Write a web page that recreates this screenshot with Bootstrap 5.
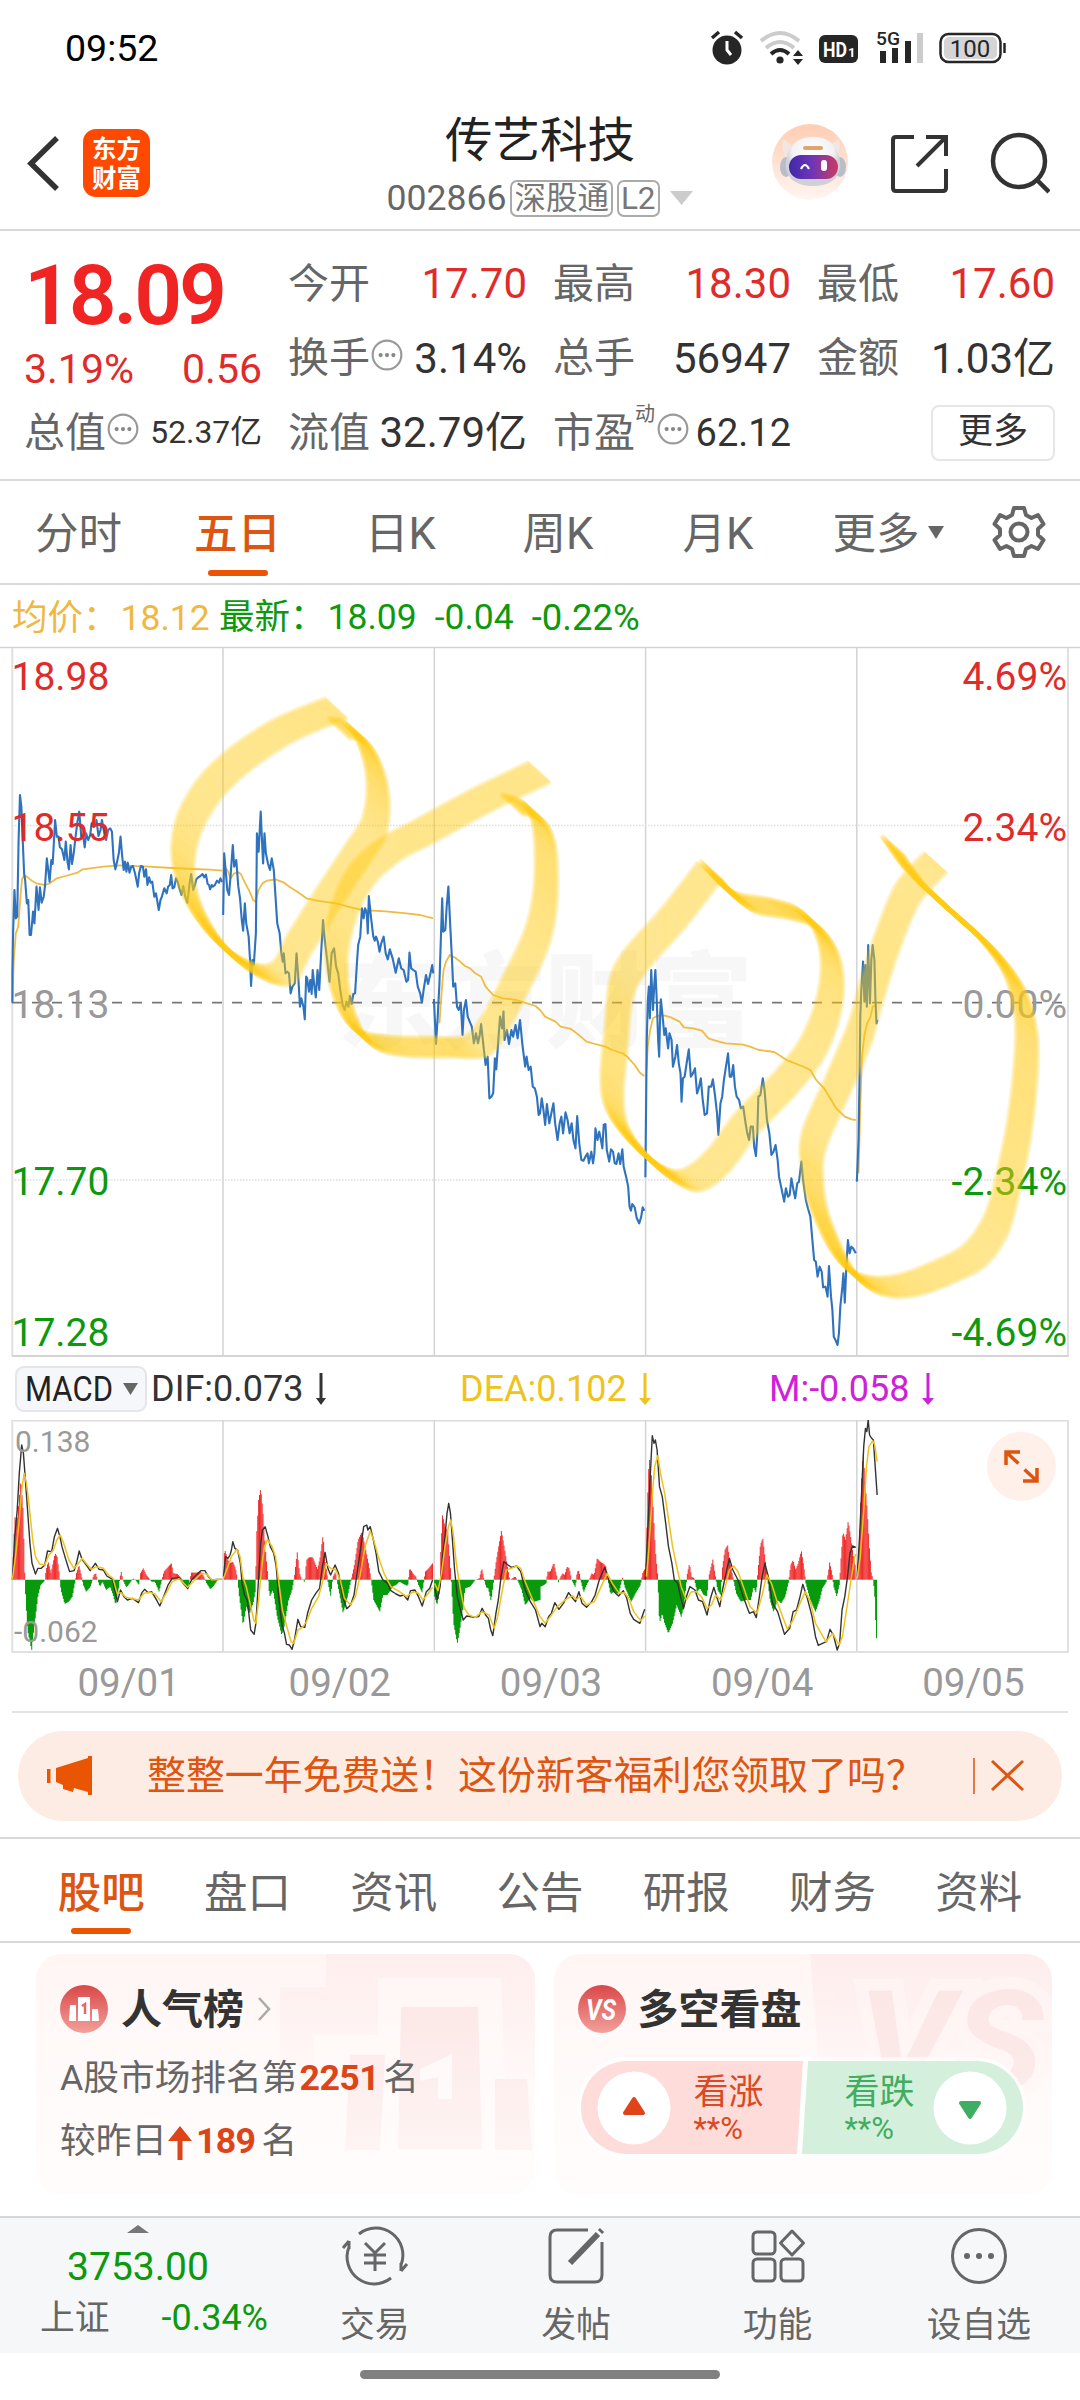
<!DOCTYPE html>
<html lang="zh-CN">
<head>
<meta charset="utf-8">
<meta name="viewport" content="width=device-width, initial-scale=1">
<title>传艺科技 002866</title>
<link rel="stylesheet" href="https://cdn.jsdelivr.net/npm/bootstrap@5.3.0/dist/css/bootstrap.min.css">
<style>
body{width:1080px;height:2400px;overflow:hidden;background:#fff;color:#333;font-family:Roboto,"Noto Sans CJK SC",sans-serif;line-height:1}
svg{display:block;flex:none}
.statusbar{height:96px;padding:2px 74px 0 65px;font-size:37.5px;color:#000}
.titlebar{height:135px;border-bottom:2px solid #d9d9d9;padding:0 30px 0 27px}
.title-mid{left:0;right:0;top:20px}
.stock-name{font-size:47.5px;color:#222;line-height:50px}
.stock-code{font-size:35.6px;color:#666;height:38px;margin-top:13px;line-height:38px}
.tagbox{border:2px solid #aaa;border-radius:7px;height:37px;line-height:33px;font-size:31.5px;padding:0 2px;color:#777}
.quote{height:250px;border-bottom:2px solid #d9d9d9;padding:16px 25px 0 24px}
.quote-grid{display:grid;grid-template-columns:238px 239px 238px 238px;column-gap:26px}
.q-cell{height:74.5px;font-size:42px;color:#333}
.q-name{color:#666;font-size:41px}
.up{color:#e02b2b}.dn{color:#0c990c}
.big-price{font-size:84px;font-weight:600;color:#f12424;height:93px;line-height:98px;letter-spacing:-3.2px;padding-left:0}
.chg{height:56px;font-size:41px;padding-top:3px}
.more-btn{width:124px;height:56px;border:2px solid #e6e6e6;border-radius:8px;font-size:35px;color:#333;padding-bottom:3px}
.periods{height:104px;border-bottom:2px solid #d9d9d9;font-size:43.5px;color:#666}
.periods>div{height:102px;padding-top:5px}
.on{color:#dd5511;font-weight:500;position:relative}
.on::after{content:"";position:absolute;left:50%;margin-left:-30px;width:60px;height:6px;border-radius:3px;background:#ea5504;bottom:7px}
.avg-row{height:62px;font-size:35.5px;padding:5px 0 0 12px}
.macd-row{height:63px;font-size:36px}
.macd-btn{width:132px;height:46px;border:2px solid #e3e5e8;border-radius:9px;background:#f6f7fa;margin-left:15px}
.dates{height:60px;margin:0 12px;border-bottom:2px solid #e3e3e3;padding:3px 0 0 11px;font-size:38.5px;color:#999}
.dates>div{width:211.2px;flex:none}
.promo{margin:18px 18px 16px;height:90px;border-radius:45px;background:#fcece3;color:#dd5511;font-size:38.9px;padding:0 37px 0 29px}
.subtabs{height:106px;border-top:2px solid #d9d9d9;border-bottom:2px solid #d9d9d9;padding:0 28px;font-size:43.5px;color:#666}
.subtabs>div{width:146.3px;height:102px;padding-top:8px}
.info-cards{padding:11px 28px 21px 36px;gap:19px;height:273px}
.info-card{width:499px;height:241px;border-radius:26px;position:relative;overflow:hidden;background:linear-gradient(#fff6f4,#fffafa 50%,#fffdfc)}
.card-bgart{position:absolute;left:0;top:0}
.card-body-z{position:relative;padding:30px 24px}
.card-head{font-size:41px;font-weight:700;height:50px;color:#333;gap:13px}
.rank-line{font-size:35.7px;color:#666;height:63px;white-space:nowrap}
.hot{color:#dd4418;font-weight:700}
.vote{position:relative;margin:27px 0 0 3px;width:442px;height:93px}
.vote-inner{position:absolute;inset:0;padding:0 16px}
.vote-txt{font-size:35px;line-height:39px;padding-top:3px}
.vote-txt small{font-size:31px;line-height:34px;display:block}
.bottombar{height:137px;border-top:2px solid #d3d8dc;background:#f6f7f9;color:#666;font-size:34.8px}
.bottombar .tabitem{width:201.4px}
.idx{width:274px;padding-top:7px}
.home-ind{width:360px;height:9px;border-radius:5px;background:#808080;margin:17px auto 0}
</style>
<script src="https://cdn.jsdelivr.net/npm/bootstrap@5.3.0/dist/js/bootstrap.bundle.min.js"></script>
</head>
<body>
<!-- status bar -->
<div class="statusbar d-flex align-items-center justify-content-between">
  <span>09:52</span>
  <svg width="296" height="56" viewBox="709 21 296 56">
    <g fill="#262626"><circle cx="726" cy="50" r="14.5"/><path d="M711 38l7-6M741 38l-7-6" stroke="#262626" stroke-width="3.5"/><path d="M726 41v9l4 5" stroke="#fff" stroke-width="3" fill="none"/></g>
    <g fill="none" stroke-width="4"><path d="M760 41q19-16 38 0" stroke="#ccc"/><path d="M765 48q14-12 28 0" stroke="#ccc"/><path d="M770 54q9-8 18 0" stroke="#262626"/></g>
    <circle cx="779" cy="60" r="3.6" fill="#262626"/><path d="M792 56l5-6 5 6zM792 59l5 6 5-6z" fill="#262626"/>
    <rect x="818" y="35" width="39" height="28" rx="6" fill="#262626"/><text x="822" y="57" font-size="21" font-weight="700" fill="#fff" textLength="24" lengthAdjust="spacingAndGlyphs">HD</text><text x="847" y="57" font-size="13" font-weight="700" fill="#fff">1</text>
    <text x="875" y="45" font-size="19" font-weight="500" fill="#262626" textLength="24" lengthAdjust="spacingAndGlyphs">5G</text>
    <path d="M882 51v12M894 48v15M907 41v22" stroke="#262626" stroke-width="6"/><path d="M919 33v30" stroke="#ccc" stroke-width="6"/>
    <rect x="939.5" y="34" width="60" height="28" rx="8" fill="#fff" stroke="#262626" stroke-width="2.500"/><rect x="943" y="37" width="53" height="22" rx="5" fill="#d5d5d5"/><path d="M1003.500 43v10" stroke="#262626" stroke-width="2.500"/>
    <text x="969" y="57" font-size="24" text-anchor="middle" fill="#262626">100</text>
  </svg>
</div>
<!-- title bar -->
<header class="titlebar d-flex align-items-center position-relative">
  <svg width="124" height="70" viewBox="27 128 124 70"><path d="M57 138L31 163.500l26 25.500" fill="none" stroke="#333" stroke-width="5.500"/><rect x="83" y="129" width="67" height="68" rx="13" fill="#ff4800"/><g fill="#fff" font-size="24.500" font-weight="700"><text x="92" y="158">东方</text><text x="92" y="187">财富</text></g></svg>
  <div class="title-mid position-absolute text-center">
    <div class="stock-name">传艺科技</div>
    <div class="stock-code d-flex justify-content-center align-items-center"><span>002866</span><span class="tagbox ms-1">深股通</span><span class="tagbox ms-1">L2</span><svg style="margin-left:10px" width="24" height="16"><path d="M0 1h23l-11.500 14z" fill="#ccc"/></svg></div>
  </div>
  <div class="d-flex align-items-center ms-auto" style="gap:41px">
    <svg width="78" height="80" viewBox="768 124 78 80">
      <defs><linearGradient id="halo" x2="0" y2="1"><stop stop-color="#ffcdb2"/><stop offset="1" stop-color="#fff6f1"/></linearGradient><linearGradient id="visor"><stop stop-color="#4128a8"/><stop offset=".45" stop-color="#6b35b8"/><stop offset="1" stop-color="#cc3a62"/></linearGradient><radialGradient id="shell" cy=".3"><stop stop-color="#fff"/><stop offset=".75" stop-color="#f2f2f5"/><stop offset="1" stop-color="#cfd0d8"/></radialGradient></defs>
      <circle cx="808" cy="163" r="38" fill="url(#halo)"/><path d="M781 140l9 6-5 14q-7-10-4-20zM837 140l-9 6 5 14q7-10 4-20z" fill="#f1e6e2"/>
      <ellipse cx="784" cy="168" rx="6" ry="10" fill="#b9bcc9"/><ellipse cx="838" cy="168" rx="6" ry="10" fill="#b9bcc9"/>
      <path d="M811 138c17 0 25 10 27 24 2 15-8 25-27 25s-29-10-27-25c2-14 10-24 27-24z" fill="url(#shell)"/><rect x="801" y="147" width="20" height="4" rx="2" fill="#dea66e"/><rect x="787" y="156" width="49" height="24" rx="12" fill="url(#visor)"/><path d="M799 170q4-8 8 0" fill="none" stroke="#fff" stroke-width="2.200"/><rect x="819" y="161" width="6" height="11" rx="3" fill="#fff"/>
    </svg>
    <svg width="60" height="60" viewBox="886 133 60 60" fill="none" stroke="#333" stroke-width="4"><path d="M911 137H893q-3 0-3 3v48q0 3 3 3h47q3 0 3-3v-19M923 137h20v19M943 137l-29 29"/></svg>
    <svg width="60" height="62" viewBox="990 132 60 62" fill="none" stroke="#333" stroke-width="4.500"><circle cx="1019" cy="161" r="26"/><path d="M1037 180l12 12"/></svg>
  </div>
</header>
<!-- quote summary -->
<section class="quote">
  <div class="quote-grid">
    <div style="grid-row:span 2"><div class="big-price">18.09</div><div class="chg up d-flex justify-content-between align-items-center"><span>3.19%</span><span>0.56</span></div></div>
    <div class="q-cell d-flex justify-content-between align-items-center"><span class="q-name">今开</span><span class="up">17.70</span></div>
    <div class="q-cell d-flex justify-content-between align-items-center"><span class="q-name">最高</span><span class="up">18.30</span></div>
    <div class="q-cell d-flex justify-content-between align-items-center"><span class="q-name">最低</span><span class="up">17.60</span></div>
    <div class="q-cell d-flex justify-content-between align-items-center"><span class="q-name d-flex align-items-center">换手<svg style="margin-top:-8px" width="34" height="34"><use href="#dots"/></svg></span><span>3.14%</span></div>
    <div class="q-cell d-flex justify-content-between align-items-center"><span class="q-name">总手</span><span>56947</span></div>
    <div class="q-cell d-flex justify-content-between align-items-center"><span class="q-name">金额</span><span>1.03亿</span></div>
    <div class="q-cell d-flex justify-content-between align-items-center"><span class="q-name d-flex align-items-center">总值<svg style="margin-top:-8px" width="34" height="34"><use href="#dots"/></svg></span><span style="font-size:31.800px">52.37亿</span></div>
    <div class="q-cell d-flex justify-content-between align-items-center"><span class="q-name">流值</span><span>32.79亿</span></div>
    <div class="q-cell d-flex justify-content-between align-items-center"><span class="q-name d-flex align-items-center">市盈<span class="align-self-start" style="font-size:20px;margin-top:-9px">动</span><svg style="margin:-8px 0 0 1px" width="34" height="34"><use href="#dots"/></svg></span><span style="font-size:38px">62.12</span></div>
    <div class="q-cell d-flex justify-content-end align-items-center"><div class="more-btn d-flex align-items-center justify-content-center">更多</div></div>
  </div>
  <svg width="0" height="0"><defs><symbol id="dots" viewBox="0 0 32 32"><circle cx="16" cy="16" r="13.500" fill="none" stroke="#999" stroke-width="2"/><g fill="#888"><circle cx="10" cy="16" r="2"/><circle cx="16" cy="16" r="2"/><circle cx="22" cy="16" r="2"/></g></symbol></defs></svg>
</section>
<!-- chart periods -->
<nav class="periods d-flex">
  <div class="d-flex align-items-center justify-content-center" style="width:157px">分时</div>
  <div class="d-flex align-items-center justify-content-center on" style="width:161px">五日</div>
  <div class="d-flex align-items-center justify-content-center" style="width:165px">日K</div>
  <div class="d-flex align-items-center justify-content-center" style="width:150px">周K</div>
  <div class="d-flex align-items-center justify-content-center" style="width:170px">月K</div>
  <div class="d-flex align-items-center justify-content-center" style="width:170px">更多<svg style="margin:-4px 0 0 8px" width="16" height="14"><path d="M0 0h16L8 13z" fill="#666"/></svg></div>
  <div class="d-flex align-items-center" style="padding:0 0 0 19px"><svg width="54" height="54" viewBox="-27 -27 54 54" fill="none" stroke="#666" stroke-width="4" stroke-linejoin="round"><path d="M-5-24H5L7-17L12.500-14L19-17L24.500-8L19-3V3L24.500 8L19 17L12.500 14L7 17L5 24H-5L-7 17L-12.500 14L-19 17L-24.500 8L-19 3V-3L-24.500-8L-19-17L-12.500-14L-7-17Z"/><circle r="8.500"/></svg></div>
</nav>
<div class="avg-row d-flex align-items-center"><span style="color:#f0b840;width:207px">均价：<span style="margin-left:2px">18.12</span></span><span class="dn d-flex" style="gap:18px"><span>最新：<span style="margin-left:2px">18.09</span></span><span>-0.04</span><span style="font-size:36.500px">-0.22%</span></span></div>
<!-- five-day price chart -->
<svg width="1080" height="711" viewBox="0 646 1080 711" style="margin-top:-1px">
  <g font-family='"Noto Sans CJK SC"' font-weight="900" font-size="104" fill="#f7f7f7"><text x="337" y="1040">东方财富</text></g>
  <g stroke="#d4d4d4" stroke-width="1.500" fill="none"><path d="M0 647.500H1080"/><path d="M223 648V1356M434.300 648V1356M645.600 648V1356M856.800 648V1356"/><path d="M12.300 648V1356M1068 648V1356" stroke="#e0e0e0" stroke-width="2"/><path d="M12 1356H1069" stroke-width="2"/><path d="M12 825.500H1068M12 1180H1068" stroke="#ddd" stroke-dasharray="1.500 1.500"/></g>
  <path d="M12 1002.700H1068" stroke="#777" stroke-width="1.800" stroke-dasharray="10 10"/>
  <g id="price" transform="translate(0 640) scale(.34439 .33333)" fill="none" stroke-linejoin="round"></g>
  <g font-size="39"><g><text x="11.500" y="690" fill="#e02b2b">18.98</text><text x="11.500" y="841" fill="#e02b2b">18.55</text><text x="11.500" y="1018" fill="#999">18.13</text><text x="11.500" y="1195" fill="#0c990c">17.70</text><text x="11.500" y="1346" fill="#0c990c">17.28</text></g>
  <g text-anchor="end"><text x="1067" y="690" fill="#e02b2b">4.69%</text><text x="1067" y="841" fill="#e02b2b">2.34%</text><text x="1067" y="1018" fill="#999">0.00%</text><text x="1067" y="1195" fill="#0c990c">-2.34%</text><text x="1067" y="1346" fill="#0c990c">-4.69%</text></g></g>
  <g id="marker" fill="none" stroke="#ffca10" stroke-linejoin="round"></g>
</svg>
<!-- MACD header -->
<div class="macd-row d-flex align-items-center">
  <div class="macd-btn d-flex align-items-center"><svg width="128" height="42" viewBox="0 0 128 42"><text x="8" y="33" font-size="35" fill="#222" textLength="88" lengthAdjust="spacingAndGlyphs">MACD</text><path d="M106 15h15l-7.500 12z" fill="#666"/></svg></div>
  <div class="d-flex align-items-center" style="width:310px;padding-left:4px">DIF:0.073<svg style="margin-left:11px" width="14" height="34"><path d="M7 1v28" stroke="#333" stroke-width="3"/><path d="M2 26h10l-5 7z" fill="#333"/></svg></div>
  <div class="d-flex align-items-center" style="width:309px;padding-left:3px;color:#efc31c">DEA:0.102<svg style="margin-left:11px" width="14" height="34"><path d="M7 1v28" stroke="#efc31c" stroke-width="3"/><path d="M1 26h12l-6 7z" fill="#efc31c"/></svg></div>
  <div class="d-flex align-items-center" style="padding-left:3px;color:#cf22d8">M:-0.058<svg style="margin-left:11px" width="14" height="34"><path d="M7 1v28" stroke="#cf22d8" stroke-width="3"/><path d="M1 26h12l-6 7z" fill="#cf22d8"/></svg></div>
</div>
<svg width="1080" height="233" viewBox="0 1420 1080 233">
  <g stroke="#d4d4d4" stroke-width="1.500" fill="none"><path d="M12 1420.800H1068" stroke="#ddd"/><path d="M223 1420V1652M434.300 1420V1652M645.600 1420V1652M856.800 1420V1652"/><path d="M12.300 1420V1652H1068V1420" stroke="#e0e0e0" stroke-width="2"/></g>
  <g id="bars" transform="translate(0 1350) scale(.34439 .33333)"></g>
  <g id="macd" transform="translate(0 1350) scale(.34439 .33333)" fill="none" stroke-linejoin="round"></g>
  <g font-size="30" fill="#999"><text x="15" y="1452">0.138</text><text x="14" y="1642">-0.062</text></g>
  <circle cx="1021.400" cy="1466.300" r="34.500" fill="#fff0e9"/><g fill="none" stroke="#dd5511" stroke-width="3.500"><path d="M1006 1465v-13h14M1006 1452l12.500 11.500M1037 1468v13h-14M1037 1481l-12.500-11.500"/></g>
</svg>
<div class="dates d-flex align-items-center text-center"><div>09/01</div><div>09/02</div><div>09/03</div><div>09/04</div><div>09/05</div></div>
<!-- promo banner -->
<div class="promo d-flex align-items-center">
  <svg width="46" height="40" viewBox="48 1756 46 40" fill="#ea5504"><path d="M48 1769h3.500v14h-3.500zM57 1768l32-10v-2h4v39h-4v-3l-14-4-1 4-10-3v-4l-7-3z"/></svg>
  <span style="margin-left:54px">整整一年免费送！这份新客福利您领取了吗？</span>
  <svg class="ms-auto" width="52" height="36" viewBox="973 1758 52 36" stroke="#dd5511" fill="none"><path d="M974 1758v36" stroke-width="1.500"/><path d="M992 1761l31 29M1023 1761l-31 29" stroke-width="3"/></svg>
</div>
<nav class="subtabs d-flex">
  <div class="d-flex align-items-center justify-content-center on">股吧</div><div class="d-flex align-items-center justify-content-center">盘口</div><div class="d-flex align-items-center justify-content-center">资讯</div><div class="d-flex align-items-center justify-content-center">公告</div><div class="d-flex align-items-center justify-content-center">研报</div><div class="d-flex align-items-center justify-content-center">财务</div><div class="d-flex align-items-center justify-content-center">资料</div>
</nav>
<!-- community cards -->
<div class="info-cards d-flex">
  <div class="info-card">
    <svg class="card-bgart" width="499" height="241" viewBox="36 1955 499 241"><defs><linearGradient id="fade" x2="0" y2="1"><stop stop-color="#fdeceb"/><stop offset="1" stop-color="#fdeceb" stop-opacity=".2"/></linearGradient><linearGradient id="pillar" x2="0" y2="1"><stop stop-color="#fae0df"/><stop offset="1" stop-color="#fdf0ee"/></linearGradient><linearGradient id="badgeRed" x2="0" y2="1"><stop stop-color="#d94848"/><stop offset="1" stop-color="#f2a09b"/></linearGradient></defs>
      <path d="M326 1955H535v125h-30l-4-101H378v57h-64v30h-34v-78h46z" fill="url(#fade)" opacity=".7"/><path d="M401 2008h77l4 142h-84zM350 2056h35l-5 95h-35zM495 2080h32l5 71h-37z" fill="url(#pillar)" opacity=".65"/><path d="M420 2070l32-15v45h-14v-22l-18 4z" fill="#fff" opacity=".7"/></svg>
    <div class="card-body-z">
      <div class="card-head d-flex align-items-center"><svg width="48" height="48" viewBox="0 0 48 48"><circle cx="24" cy="24" r="24" fill="url(#badgeRed)"/><path d="M10 20h6v16h-7zM18 12h12v24H18zM32 24h6l1 12h-7z" fill="#fff"/><path d="M22 21l3-2v10" fill="none" stroke="#e26a67" stroke-width="2.500"/></svg><span style="margin-top:3px">人气榜</span><svg width="15" height="26"><path d="M2 2l10 11L2 24" fill="none" stroke="#aaa" stroke-width="2.500"/></svg></div>
      <div class="rank-line d-flex align-items-center" style="margin-top:13px">A股市场排名第<span class="hot" style="margin:0 4px 0 2px;letter-spacing:-.5px">2251</span>名</div>
      <div class="rank-line d-flex align-items-center">较昨日<svg style="margin:3px 3px 0 0" width="26" height="34"><path d="M13 12v22" stroke="#dd4418" stroke-width="5"/><path d="M1 15L13 0l12 15z" fill="#dd4418"/></svg><span class="hot" style="margin-right:6px;letter-spacing:-.7px">189</span>名</div>
    </div>
  </div>
  <div class="info-card">
    <svg class="card-bgart" width="499" height="241" viewBox="554 1955 499 241"><path d="M810 1955H1053V2080H820z" fill="url(#fade)" opacity=".8"/><text x="858" y="2092" font-size="140" font-weight="700" font-style="italic" fill="#fae2e0" stroke="#fff7f5" stroke-width="24" paint-order="stroke" textLength="185" lengthAdjust="spacingAndGlyphs" opacity=".6">VS</text></svg>
    <div class="card-body-z">
      <div class="card-head d-flex align-items-center"><svg width="48" height="48" viewBox="0 0 48 48"><circle cx="24" cy="24" r="24" fill="url(#badgeRed)"/><text x="23" y="35" font-size="30" font-weight="700" font-style="italic" text-anchor="middle" fill="#fff" textLength="30" lengthAdjust="spacingAndGlyphs">VS</text></svg><span style="margin:3px 0 0 -1px">多空看盘</span></div>
      <div class="vote">
        <svg width="442" height="93" style="overflow:visible"><rect x="-3" y="-4" width="448" height="101" rx="50" fill="#fff" opacity=".7"/><path d="M46.500 0H222l-6 93H46.500a46.500 46.500 0 0 1 0-93z" fill="#fddcd9"/><path d="M227 0H395.500a46.500 46.500 0 0 1 0 93H221z" fill="#d5efdd"/></svg>
        <div class="vote-inner d-flex align-items-center">
          <svg width="74" height="74"><circle cx="37" cy="37" r="36.500" fill="#fff"/><path d="M37 28l9 14H28z" fill="#e0431a" stroke="#e0431a" stroke-width="4" stroke-linejoin="round"/></svg>
          <div class="vote-txt" style="color:#d94a22;margin-left:23px">看涨<small>**%</small></div>
          <div class="vote-txt ms-auto" style="color:#40ad60;margin-right:18px">看跌<small>**%</small></div>
          <svg width="74" height="74"><circle cx="37" cy="37" r="36.500" fill="#fff"/><path d="M37 46l9-14H28z" fill="#3eae62" stroke="#3eae62" stroke-width="4" stroke-linejoin="round"/></svg>
        </div>
      </div>
    </div>
  </div>
</div>
<!-- bottom bar -->
<div class="bottombar d-flex">
  <div class="idx"><svg style="margin-left:127px" width="22" height="8"><path d="M11 0L22 8H0z" fill="#777"/></svg><div class="dn text-center" style="font-size:39px;margin-top:15px;padding-left:2px">3753.00</div><div class="d-flex align-items-center" style="padding:0 6px 0 40px;height:36px;margin-top:13px"><span>上证</span><span class="dn ms-auto" style="font-size:36px">-0.34%</span></div></div>
  <div class="tabitem text-center"><svg class="mx-auto" style="margin-top:6px" width="68" height="64" viewBox="-34 -32 68 64" fill="none" stroke="#666" stroke-width="3"><path d="M-16-22A27 27 0 0 1 26 9M26 15l6-7M26 15v-8M16 22A27 27 0 0 1-26-9M-26-15l-6 7M-26-15v8"/><path d="M-10-13L0-3L10-13M0-3V15M-11-1H11M-11 7H11"/></svg><div style="margin-top:20px">交易</div></div>
  <div class="tabitem text-center"><svg class="mx-auto" style="margin-top:6px" width="68" height="64" viewBox="-34 -32 68 64" fill="none" stroke="#666" stroke-width="3"><path d="M12-26H-19q-7 0-7 7V19q0 7 7 7H19q7 0 7-7V-14"/><path d="M-6 7L22-22" stroke-width="6"/><path d="M24-24l2-2" stroke-width="6"/></svg><div style="margin-top:20px">发帖</div></div>
  <div class="tabitem text-center"><svg class="mx-auto" style="margin-top:6px" width="68" height="64" viewBox="-34 -32 68 64" fill="none" stroke="#666" stroke-width="3"><rect x="-24" y="-24" width="22" height="22" rx="4"/><rect x="-24" y="3" width="22" height="22" rx="4"/><rect x="4" y="3" width="22" height="22" rx="4"/><path d="M15-25l11.500 12L15-1L3.500-13z" stroke-linejoin="round"/></svg><div style="margin-top:20px">功能</div></div>
  <div class="tabitem text-center"><svg class="mx-auto" style="margin-top:6px" width="68" height="64" viewBox="-34 -32 68 64"><circle r="26.500" fill="none" stroke="#666" stroke-width="3"/><g fill="#666"><circle cx="-12" r="3"/><circle r="3"/><circle cx="12" r="3"/></g></svg><div style="margin-top:20px">设自选</div></div>
</div>
<div class="home-ind"></div>
<script>
const NS='http://www.w3.org/2000/svg';
const add=(id,tag,a)=>{const e=document.createElementNS(NS,tag);for(const k in a)e.setAttribute(k,a[k]);document.getElementById(id).appendChild(e)};
const line=(id,pts,c,w)=>add(id,'polyline',{points:pts,stroke:c,'stroke-width':w,'vector-effect':'non-scaling-stroke'});
// second-half sessions are stored relative to the middle of the chart
const shift=s=>s.split(' ').map(p=>{const[a,b]=p.split(',');return(+a+1568)+','+b}).join(' ');
const avg=["36,1080 40,960 46,880 53,860 60,760 64,718 70,705 78,710 92,722 105,730 130,735 145,730 165,715 190,708 225,698 240,688 300,680 350,676 420,679 500,684 560,687 610,689 645,692",
"649,680 660,690 670,715 680,700 692,697 700,703 712,730 725,755 735,780 742,785 750,752 762,730 775,722 800,718 825,728 840,740 860,753 890,775 920,782 960,788 985,792 1010,800 1050,810 1120,814 1180,820 1220,825 1258,835",
"1276,1150 1282,1060 1288,990 1295,965 1306,945 1320,952 1333,962 1350,978 1365,985 1380,1000 1397,1010 1410,1040 1432,1065 1460,1075 1500,1080 1530,1090 1555,1098 1568,1110 "+shift("15,1130 45,1145 60,1160 90,1167 115,1187 135,1205 160,1212 190,1220 210,1230 240,1240 255,1252 275,1275 290,1298 303,1308"),
shift("309,1290 313,1220 320,1170 328,1135 340,1128 360,1126 380,1132 405,1145 418,1162 445,1165 470,1172 490,1196 520,1205 540,1210 590,1214 610,1220 635,1230 680,1236 720,1262 760,1278 785,1290 802,1320 825,1345 840,1370 860,1405 885,1430 905,1438 917,1440"),
shift("925,1600 930,1400 935,1250 942,1185 950,1150 960,1130 966,1100 972,1098 977,1098")];
const price=["36,1088 36,1000 38,880 42,750 46,835 50,830 54,600 58,465 62,500 66,600 70,700 73,720 78,790 82,780 86,885 90,885 96,815 100,850 106,740 112,810 116,742 121,788 127,770 131,735 136,655 144,725 149,660 153,672 160,540 165,590 170,590 174,622 180,628 187,660 191,605 196,665 200,688 205,615 209,672 214,640 220,585 225,545 230,515 236,590 242,590 246,622 250,580 256,600 262,585 266,550 272,560 280,540 286,588 292,570 296,540 302,575 308,600 314,570 320,565 325,575 330,660 335,688 340,665 345,640 350,590 354,640 359,690 363,665 367,695 371,668 376,698 381,680 386,678 392,700 400,740 404,700 409,678 415,680 419,710 424,688 428,735 433,712 437,728 442,725 448,770 453,760 461,810 466,780 470,770 477,745 484,760 488,740 493,735 497,705 501,745 506,742 511,715 516,725 521,745 527,765 532,738 538,770 544,788 550,735 555,702 561,750 566,735 570,718 576,712 582,708 588,702 593,712 598,704 603,732 607,735 610,748 615,735 618,740 624,735 630,722 636,728 640,715 645,726",
"648,825 651,640 656,700 660,750 665,765 670,700 676,615 680,680 686,660 692,740 697,775 702,840 706,872 711,790 715,850 722,890 726,960 729,1038 733,960 737,975 743,880 745,700 746,580 751,635 757,515 762,630 764,670 768,580 772,640 778,670 784,690 789,655 795,690 800,770 805,850 812,880 817,940 821,965 824,940 829,1000 834,995 839,1000 844,1060 849,1040 856,1030 861,940 866,1010 871,1100 875,1075 881,1100 885,1138 889,1010 892,1015 897,1055 901,1020 905,1062 908,990 913,1040 917,1072 922,990 927,1050 933,930 938,840 943,900 950,960 957,1025 963,940 970,925 976,980 982,1000 988,1050 995,1095 1001,1110 1006,1085 1012,1100 1016,1068 1021,1092 1026,1062 1031,1060 1037,960 1040,915 1046,890 1051,805 1056,835 1060,805 1065,820 1068,880 1071,768 1077,830 1084,890 1088,902 1092,890 1097,905 1102,935 1107,910 1114,890 1120,940 1126,958 1132,928 1140,955 1149,998 1158,955 1165,985 1172,990 1180,1025 1185,1020 1189,938 1194,985 1200,990 1207,995 1213,1040 1220,1060 1225,1088 1230,1050 1237,1005 1243,1032 1250,1000 1255,975 1258,1000",
"1260,1077 1266,1212 1271,1130 1276,1030 1280,900 1284,775 1287,875 1293,870 1297,800 1302,740 1307,850 1312,950 1316,1040 1322,1030 1327,1100 1332,1110 1338,1090 1343,1185 1347,1110 1353,1080 1358,1130 1366,1150 1370,1160 1376,1210 1382,1180 1388,1210 1393,1185 1397,1152 1404,1220 1410,1275 1416,1250 1421,1375 1427,1370 1432,1360 1437,1255 1441,1288 1447,1200 1452,1130 1458,1165 1462,1115 1465,1200 1472,1170 1478,1212 1485,1170 1490,1190 1497,1155 1503,1195 1510,1140 1517,1215 1525,1280 1529,1250 1535,1290 1541,1280 1547,1340 1553,1345 1559,1370 1564,1425 1568,1420 "+shift("5,1375 10,1410 15,1455 20,1392 27,1450 33,1420 39,1390 44,1450 51,1500 57,1450 62,1430 67,1480 74,1417 80,1440 86,1480 92,1450 97,1500 103,1525 108,1428 114,1510 120,1560 126,1562 132,1550 138,1540 142,1570 149,1535 154,1570 158,1540 161,1465 167,1500 172,1475 177,1500 181,1525 185,1455 190,1452 194,1530 201,1565 206,1528 212,1535 217,1570 222,1572 228,1540 233,1572 239,1528 243,1580 250,1610 256,1640 260,1700 264,1712 268,1692 275,1702 281,1735 288,1750 294,1730 298,1702 303,1712"),
shift("306,1612 308,1400 310,1200 313,1085 316,1040 319,1135 323,990 328,1110 332,1030 335,990 339,1080 343,1200 346,1250 349,1120 351,1078 356,1130 361,1185 365,1165 372,1225 376,1180 382,1200 386,1280 393,1250 398,1215 403,1270 408,1300 411,1385 415,1315 420,1310 425,1275 432,1228 438,1310 444,1300 450,1285 456,1360 461,1345 467,1315 472,1375 478,1425 485,1420 490,1340 497,1340 502,1318 508,1365 514,1420 518,1485 524,1390 529,1370 534,1320 540,1280 546,1240 551,1310 556,1310 561,1275 566,1340 571,1370 578,1380 583,1405 590,1400 597,1450 602,1480 607,1500 612,1460 618,1460 622,1520 627,1548 631,1480 634,1370 640,1365 647,1315 652,1350 659,1440 666,1480 672,1545 678,1535 684,1515 690,1560 694,1610 700,1640 704,1660 709,1685 714,1645 720,1670 725,1665 730,1615 736,1650 741,1675 747,1630 752,1625 759,1565 764,1620 772,1680 778,1705 785,1730 790,1790 796,1860 801,1865 806,1910 812,1880 818,1895 822,1942 829,1940 835,1970 839,1878 845,1970 849,2010 853,2090 858,2100 864,2115 868,2080 872,2000 878,1940 881,1900 885,1988 890,1870 894,1800 899,1840 904,1820 909,1825 917,1840"),
shift("920,1625 925,1500 928,1300 930,1130 933,1050 938,965 942,1085 945,975 949,1100 953,915 958,1090 962,960 966,915 971,960 974,1080 977,1150 980,1140")];
avg.forEach(p=>line('price',p,'#f0bb45',1.8));
price.forEach(p=>line('price',p,'#2f72bd',2.1));

// highlighter loops: a slanted nib swept along a smooth curve
const loops=[
[[337,708],[279,733],[224,773],[194,813],[183,853],[189,893],[213,935],[248,966],[281,974],[300,943],[327,900],[358,853],[374,827],[378,790],[370,755],[355,732],[338,728]],
[[540,772],[482,800],[423,832],[389,850],[361,876],[342,917],[336,960],[345,1007],[364,1037],[396,1046],[441,1047],[476,1046],[494,1025],[514,987],[536,940],[545,900],[546,853],[542,827],[533,812],[520,806],[511,804]],
[[709,872],[674,917],[636,960],[621,990],[616,1040],[612,1087],[618,1120],[643,1153],[674,1177],[695,1179],[719,1160],[747,1123],[788,1080],[815,1043],[831,993],[829,950],[810,920],[781,909],[747,903],[727,889],[710,870]],
[[892,845],[915,877],[952,912],[988,945],[1015,983],[1026,1025],[1026,1067],[1019,1130],[1007,1187],[996,1225],[975,1255],[946,1271],[912,1284],[884,1287],[860,1279],[839,1255],[818,1207],[812,1173],[814,1140],[837,1087],[860,1033],[871,993],[888,940],[908,893],[936,862]]];
const smooth=p=>{let d='M'+p[0];for(let i=0;i<p.length-1;i++){const a=p[i-1]||p[i],b=p[i],c=p[i+1],e=p[i+2]||c;d+=`C${b[0]+(c[0]-a[0])/6} ${b[1]+(c[1]-a[1])/6} ${c[0]-(e[0]-b[0])/6} ${c[1]-(e[1]-b[1])/6} ${c[0]} ${c[1]}`}return d};
loops.forEach(p=>{const d=smooth(p),n=22;for(let i=0;i<=n;i++){const t=i/n-.5;add('marker','path',{d,transform:`translate(${t*22} ${t*20})`,'stroke-width':5,'stroke-opacity':.155})}});

// MACD histogram and lines; zero line at 689
const hist=["36,689 43,500 50,520 59,400 62,405 67,480 72,680 75,750 80,840 92,900 97,850 103,800 110,740 118,705 130,692 134,660 140,635 148,670 154,640 160,610 166,620 173,680 177,720 188,762 200,755 210,740 218,695 222,670 229,645 236,675 242,705 250,725 262,712 268,692 272,675 278,670 283,688 290,710 298,695 308,720 320,710 330,740 336,765 344,720 348,685 352,665 357,690 367,712 380,695 387,685 395,692 404,705 408,670 416,655 425,675 433,685 440,695 450,695 462,725 470,690 476,665 485,655 498,640 503,670 515,672 527,685 535,700 545,717 551,690 556,668 570,668 583,665 592,680 600,700 611,718 620,708 632,690 645,689",
"649,689 652,595 660,625 668,640 676,635 684,655 690,690 695,740 706,825 715,770 725,790 735,760 742,720 745,560 751,450 757,415 763,480 770,590 778,680 783,740 793,720 805,800 818,855 825,830 838,750 848,720 855,680 863,605 870,670 876,688 882,688 885,702 890,630 898,622 908,622 915,640 922,658 930,620 938,555 944,630 953,700 960,738 967,680 974,665 980,700 996,788 1005,760 1015,710 1022,680 1030,640 1040,570 1051,545 1060,590 1070,640 1078,690 1085,750 1103,785 1112,735 1125,735 1140,710 1150,705 1160,695 1168,700 1184,708 1190,655 1200,672 1208,680 1215,705 1226,728 1235,665 1245,655 1256,640",
"1262,740 1269,765 1277,720 1280,600 1285,495 1292,530 1300,545 1307,640 1312,720 1317,820 1328,880 1335,840 1345,770 1350,715 1365,710 1380,690 1392,685 1399,655 1405,685 1412,712 1418,715 1426,755 1435,680 1440,640 1448,590 1456,542 1464,590 1472,640 1480,690 1496,680 1505,695 1515,720 1525,765 1540,745 1550,755 1568,750 "+shift("2,710 12,705 18,700 22,665 30,665 40,638 47,670 53,698 60,680 66,670 72,675 78,650 85,655 92,690 103,712 108,665 113,662 118,690 127,727 135,705 143,690 150,670 157,675 166,625 175,635 185,642 192,650 197,690 205,732 215,725 228,732 240,682 246,710 265,755 280,725 292,705 298,670 305,655"),
shift("308,640 313,430 317,320 323,370 330,500 335,600 342,680 347,820 355,790 362,820 373,850 385,820 397,765 410,800 418,770 425,700 428,670 434,640 440,680 448,685 456,725 465,715 475,735 485,738 490,680 502,628 508,670 516,720 525,735 530,650 537,600 545,585 552,640 560,680 570,730 583,755 600,750 612,750 620,710 628,730 633,660 640,585 647,565 653,620 660,680 668,750 678,785 690,750 700,760 712,740 722,695 728,645 735,630 742,660 750,640 759,602 766,650 772,700 785,750 800,785 812,750 820,715 832,695 837,670 841,637 848,670 853,710 862,740 870,700 873,640 880,545 887,570 895,513 902,560 910,620 917,655"),
shift("921,680 928,560 933,400 938,300 943,380 950,480 957,600 962,670 968,690 972,740 976,850 979,890")];
hist.forEach(s=>{const p=s.split(' ').map(q=>q.split(',').map(Number));let r='',g='',j=0;
 for(let x=p[0][0];x<=p[p.length-1][0];x+=2.55){while(j<p.length-2&&p[j+1][0]<x)j++;const a=p[j],b=p[j+1],y=a[1]+(b[1]-a[1])*(x-a[0])/(b[0]-a[0]);if(y<689)r+=`M${x} 689V${y}`;else g+=`M${x} 689V${y}`}
 add('bars','path',{d:r,stroke:'#f02626','stroke-width':2.9});add('bars','path',{d:g,stroke:'#079a0c','stroke-width':3})});
const dif=["36,689 43,560 50,480 56,370 63,285 68,310 73,380 80,480 87,580 93,640 103,672 110,655 120,655 130,645 138,603 150,605 158,560 167,535 174,560 180,590 190,625 202,665 215,662 222,640 230,603 238,628 247,640 262,662 277,640 288,658 300,660 310,678 327,688 333,720 341,755 350,720 360,740 370,750 385,745 402,758 412,728 420,718 430,728 440,725 452,745 464,768 475,740 488,705 500,685 520,683 532,700 545,716 556,690 570,675 583,662 595,662 605,680 615,690 630,688 645,688",
"649,680 655,620 662,625 668,615 672,600 676,575 682,595 690,600 698,640 703,700 710,735 718,750 728,840 738,853 743,820 750,700 757,580 762,540 770,530 778,560 785,590 795,610 802,650 810,750 818,820 826,850 832,883 840,885 848,898 855,870 865,808 873,830 885,832 893,790 905,750 917,730 928,715 936,650 944,607 952,655 960,675 973,645 983,670 995,740 1007,776 1018,765 1028,735 1038,660 1048,590 1056,530 1065,525 1068,540 1075,530 1082,560 1092,610 1100,665 1112,690 1125,700 1135,722 1150,732 1162,738 1172,735 1184,750 1192,722 1205,720 1215,740 1226,768 1238,725 1248,715 1256,690",
"1262,715 1270,748 1278,710 1285,620 1292,560 1298,490 1303,460 1308,490 1313,560 1320,660 1328,740 1337,780 1345,810 1355,798 1365,800 1375,802 1390,800 1400,775 1410,795 1418,805 1425,840 1431,857 1440,790 1447,750 1455,680 1463,635 1475,645 1485,652 1500,648 1512,665 1525,720 1540,755 1555,780 1568,830 "+shift("5,820 15,830 25,800 33,790 43,758 55,778 68,760 83,728 95,745 103,755 113,725 122,760 135,772 150,755 160,735 172,690 188,652 200,690 215,725 228,738 242,722 252,745 262,790 272,808 290,820 298,795 304,778"),
shift("306,689 312,560 320,380 326,257 331,280 335,270 340,300 347,410 355,440 365,520 373,590 383,640 390,690 400,700 408,740 417,775 425,740 435,710 450,720 460,750 472,755 485,795 495,745 505,712 513,740 522,770 530,720 540,670 550,625 560,660 575,690 590,740 608,790 620,785 628,803 637,740 645,680 653,640 663,680 675,760 690,785 710,853 725,835 735,785 745,780 755,740 763,703 775,740 790,800 800,860 808,886 820,880 832,875 842,838 852,855 863,900 870,880 877,780 885,740 893,680 900,610 908,588 917,592"),
shift("921,680 928,560 935,400 940,290 945,235 949,245 953,210 957,255 963,265 968,270 972,330 979,435")];
const dea=["36,689 45,620 55,520 63,420 70,370 77,400 85,470 95,570 103,620 115,642 130,645 142,615 155,600 165,570 175,555 185,580 200,630 215,655 228,640 238,625 250,640 265,658 280,650 300,655 315,675 328,685 340,730 352,728 365,742 385,746 402,750 418,730 435,727 450,732 468,755 485,725 500,695 520,686 545,712 565,690 585,670 600,672 615,690 645,688",
"649,685 660,655 672,620 688,598 697,620 705,680 715,710 725,755 737,810 743,820 750,760 760,650 768,590 777,568 790,590 800,620 810,700 820,780 833,830 845,875 853,880 865,840 878,832 890,815 905,775 925,740 938,690 946,640 960,655 975,660 988,690 1000,745 1018,765 1032,740 1045,680 1060,590 1075,543 1085,570 1100,625 1115,670 1135,710 1160,725 1180,740 1200,725 1215,730 1228,750 1240,735 1256,712",
"1262,700 1272,722 1282,670 1292,590 1302,530 1309,510 1316,550 1325,640 1337,720 1348,775 1362,795 1380,802 1400,785 1420,795 1435,835 1445,800 1457,730 1470,660 1485,655 1500,648 1512,655 1525,695 1545,745 1568,800 "+shift("15,820 30,800 50,770 75,748 95,737 105,748 118,740 135,765 158,755 175,715 195,670 210,700 230,730 245,728 258,745 272,785 292,812 304,798"),
shift("309,680 316,600 325,450 333,350 342,317 350,370 362,430 372,500 385,590 397,650 410,710 425,750 440,725 455,725 470,742 485,775 498,765 510,735 525,750 538,710 550,660 562,648 575,665 592,715 610,770 630,790 645,735 658,675 672,700 690,760 718,837 735,810 755,760 770,725 785,755 800,820 830,875 850,850 868,885 878,860 890,780 903,690 912,630 917,612"),
shift("921,685 930,620 940,480 948,350 955,290 966,272 972,285 979,335")];
dif.forEach(p=>line('macd',p,'#333',1.4));
dea.forEach(p=>line('macd',p,'#efc31c',1.5));
</script>
</body>
</html>
